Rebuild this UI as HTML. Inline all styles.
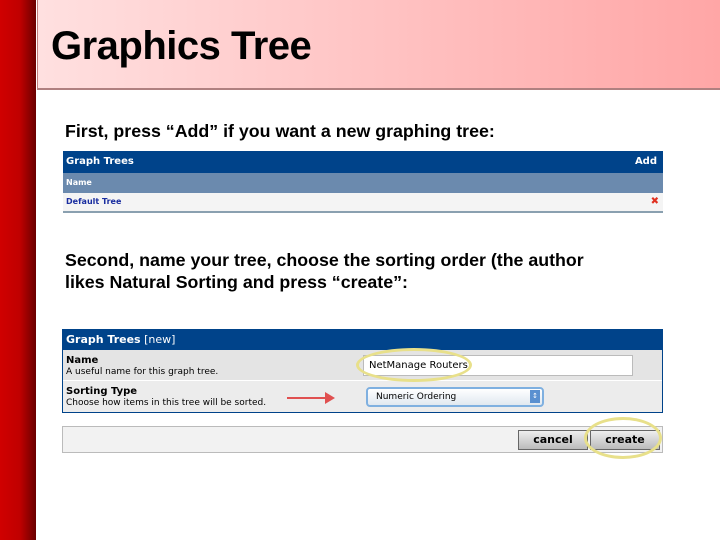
<!DOCTYPE html>
<html><head><style>
body{margin:0;width:720px;height:540px;background:#fff;position:relative;overflow:hidden;font-family:"Liberation Sans",sans-serif}
.bar{position:absolute;left:0;top:0;width:36px;height:540px;background:linear-gradient(90deg,#d00000 0%,#c00000 55%,#6a0000 100%)}
.hdr{position:absolute;left:37px;top:0;width:683px;height:88px;background:linear-gradient(90deg,#ffe0e0,#ffa6a6);border-bottom:2px solid #b08080;border-left:1px solid #c08080}
.hdr h1{margin:0;position:absolute;left:13px;top:24px;font-size:40px;font-weight:bold;color:#000;letter-spacing:-0.5px}
.t{position:absolute;font-size:17.8px;font-weight:bold;color:#000;line-height:22px}
.abs{position:absolute}
.s{font-family:"DejaVu Sans","Liberation Sans",sans-serif}
</style></head><body>
<div class="bar"></div>
<div class="hdr"><h1>Graphics Tree</h1></div>
<div class="t" style="left:65px;top:120px">First, press “Add” if you want a new graphing tree:</div>
<div class="abs" style="left:63px;top:151px;width:600px;height:61px">
 <div class="abs s" style="left:0;top:0;width:600px;height:22px;background:#00438a;color:#fff;font-size:10px;font-weight:bold;line-height:22px"><span style="margin-left:3px">Graph Trees</span><span style="position:absolute;right:6px">Add</span></div>
 <div class="abs s" style="left:0;top:22px;width:600px;height:20px;background:#6b8aae;color:#fff;font-size:8px;font-weight:bold;line-height:20px"><span style="margin-left:3px">Name</span></div>
 <div class="abs s" style="left:0;top:42px;width:600px;height:18px;background:#f4f4f4;color:#1a2ea0;font-size:8px;font-weight:bold;line-height:18px;border-bottom:2px solid #8aa0b0"><span style="margin-left:3px">Default Tree</span><span style="position:absolute;right:4px;color:#e03020;font-size:10px">✖</span></div>
</div>
<div class="t" style="left:65px;top:249px">Second, name your tree, choose the sorting order (the author<br>likes Natural Sorting and press “create”:</div>
<div class="abs" style="left:62px;top:329px;width:599px;height:82px;border:1px solid #00438a;background:#e8e8e8">
 <div class="abs s" style="left:0;top:0;width:599px;height:20px;background:#00438a;color:#fff;font-size:11px;line-height:20px"><b style="margin-left:3px">Graph Trees</b> [new]</div>
 <div class="abs s" style="left:0;top:20px;width:599px;height:30px;background:#e4e4e4;border-bottom:1px solid #fff;font-size:9px;line-height:11px"><div style="margin:5px 0 0 3px"><b style="font-size:10px">Name</b><br>A useful name for this graph tree.</div></div>
 <div class="abs s" style="left:0;top:51px;width:599px;height:31px;background:#ececec;font-size:9px;line-height:11px"><div style="margin:5px 0 0 3px"><b style="font-size:10px">Sorting Type</b><br>Choose how items in this tree will be sorted.</div></div>
 <div class="abs s" style="left:300px;top:25px;width:268px;height:19px;background:#fff;border:1px solid #bbb;font-size:10px;line-height:19px"><span style="margin-left:5px">NetManage Routers</span></div>
 <div class="abs" style="left:293px;top:18px;width:116px;height:34px;border:3px solid #e8e08a;border-radius:50%;box-sizing:border-box"></div>
 <div class="abs s" style="left:303px;top:57px;width:174px;height:16px;background:linear-gradient(#fff,#e0e8f0);border:2px solid #7fb0e0;border-radius:4px;font-size:9px;line-height:16px"><span style="margin-left:8px">Numeric Ordering</span><span style="position:absolute;right:2px;top:1px;width:10px;height:13px;background:#5a90d0;color:#fff;font-size:7px;text-align:center;line-height:13px">↕</span></div>
 <div class="abs" style="left:224px;top:67px;width:42px;height:2px;background:#e05050"></div>
 <div class="abs" style="left:262px;top:62px;width:0;height:0;border-left:10px solid #e05050;border-top:6px solid transparent;border-bottom:6px solid transparent"></div>
</div>
<div class="abs" style="left:62px;top:426px;width:599px;height:25px;background:#f2f2f2;border:1px solid #bbb">
 <div class="abs s" style="left:455px;top:3px;width:68px;height:18px;background:linear-gradient(#eee,#bbb);border:1px solid #666;font-size:11px;font-weight:bold;text-align:center;line-height:18px">cancel</div>
 <div class="abs s" style="left:527px;top:3px;width:68px;height:18px;background:linear-gradient(#eee,#bbb);border:1px solid #666;font-size:11px;font-weight:bold;text-align:center;line-height:18px">create</div>
 <div class="abs" style="left:521px;top:-10px;width:78px;height:42px;border:3px solid #e8e08a;border-radius:50%;box-sizing:border-box"></div>
</div>
</body></html>
